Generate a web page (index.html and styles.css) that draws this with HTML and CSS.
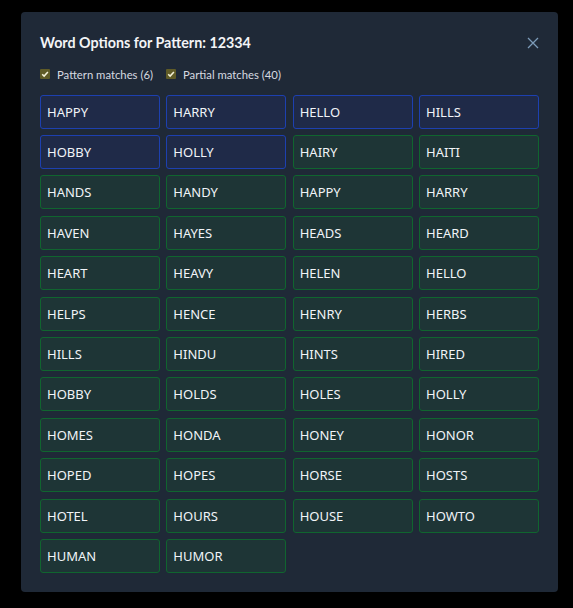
FILE: index.html
```html
<!DOCTYPE html>
<html>
<head>
<meta charset="utf-8">
<link rel="stylesheet" href="styles.css">
</head>
<body>
<div class="modal">
  <div class="header">
    <h2 class="title">Word Options for Pattern: 12334</h2>
    <button class="close" aria-label="Close">
      <svg width="12" height="12" viewBox="0 0 12 12"><path d="M1 1L11 11M11 1L1 11" stroke="currentColor" stroke-width="1.3" fill="none"/></svg>
    </button>
  </div>
  <div class="filters">
    <label class="filter"><span class="check"><svg width="10" height="10" viewBox="0 0 10 10"><path d="M2.2 5.2L4.1 7.1L7.9 2.9" stroke="#f4f1d8" stroke-width="1.5" fill="none"/></svg></span>Pattern matches (6)</label>
    <label class="filter"><span class="check"><svg width="10" height="10" viewBox="0 0 10 10"><path d="M2.2 5.2L4.1 7.1L7.9 2.9" stroke="#f4f1d8" stroke-width="1.5" fill="none"/></svg></span>Partial matches (40)</label>
  </div>
  <div class="grid">
    <div class="word exact">HAPPY</div>
    <div class="word exact">HARRY</div>
    <div class="word exact">HELLO</div>
    <div class="word exact">HILLS</div>
    <div class="word exact">HOBBY</div>
    <div class="word exact">HOLLY</div>
    <div class="word partial">HAIRY</div>
    <div class="word partial">HAITI</div>
    <div class="word partial">HANDS</div>
    <div class="word partial">HANDY</div>
    <div class="word partial">HAPPY</div>
    <div class="word partial">HARRY</div>
    <div class="word partial">HAVEN</div>
    <div class="word partial">HAYES</div>
    <div class="word partial">HEADS</div>
    <div class="word partial">HEARD</div>
    <div class="word partial">HEART</div>
    <div class="word partial">HEAVY</div>
    <div class="word partial">HELEN</div>
    <div class="word partial">HELLO</div>
    <div class="word partial">HELPS</div>
    <div class="word partial">HENCE</div>
    <div class="word partial">HENRY</div>
    <div class="word partial">HERBS</div>
    <div class="word partial">HILLS</div>
    <div class="word partial">HINDU</div>
    <div class="word partial">HINTS</div>
    <div class="word partial">HIRED</div>
    <div class="word partial">HOBBY</div>
    <div class="word partial">HOLDS</div>
    <div class="word partial">HOLES</div>
    <div class="word partial">HOLLY</div>
    <div class="word partial">HOMES</div>
    <div class="word partial">HONDA</div>
    <div class="word partial">HONEY</div>
    <div class="word partial">HONOR</div>
    <div class="word partial">HOPED</div>
    <div class="word partial">HOPES</div>
    <div class="word partial">HORSE</div>
    <div class="word partial">HOSTS</div>
    <div class="word partial">HOTEL</div>
    <div class="word partial">HOURS</div>
    <div class="word partial">HOUSE</div>
    <div class="word partial">HOWTO</div>
    <div class="word partial">HUMAN</div>
    <div class="word partial">HUMOR</div>
  </div>
</div>
</body>
</html>
```

FILE: styles.css
```css
html, body {
  margin: 0;
  padding: 0;
  background: #000;
  height: 100%;
}
body {
  font-family: "Noto Sans", "Open Sans", sans-serif;
  color: #e5e7eb;
  padding: 12px 0 0 21px;
  box-sizing: border-box;
}
.modal {
  width: 537px;
  height: 580px;
  box-sizing: border-box;
  background: #1f2937;
  border-radius: 4px;
  padding: 19px 19px 19px 19px;
  display: flex;
  flex-direction: column;
}
.header {
  display: flex;
  justify-content: space-between;
  align-items: center;
  height: 24px;
}
.title {
  margin: 0;
  font-family: Lato, "Noto Sans", sans-serif;
  font-size: 14.3px;
  font-weight: 700;
  color: #f3f4f6;
  line-height: 24px;
}
.close {
  background: none;
  border: 0;
  padding: 0;
  width: 12px;
  height: 12px;
  color: #7c9bb8;
  display: flex;
}
.filters {
  display: flex;
  gap: 13px;
  margin-top: 12px;
  height: 15px;
  align-items: center;
}
.filter {
  display: flex;
  align-items: center;
  gap: 7px;
  font-family: Lato, "Noto Sans", sans-serif;
  font-size: 11.3px;
  color: #d6dae0;
}
.check {
  width: 10px;
  height: 10px;
  background: #5f5b27;
  border-radius: 1px;
  display: flex;
}
.grid {
  margin-top: 13px;
  display: grid;
  grid-template-columns: repeat(4, 1fr);
  gap: 6.4px;
}
.word {
  height: 34px;
  box-sizing: border-box;
  border-radius: 3px;
  padding: 0 6px;
  display: flex;
  align-items: center;
  font-size: 13px;
  color: #f1f4f8;
}
.exact {
  background: #1f2a48;
  border: 1px solid #1d40b0;
}
.partial {
  background: #1e3536;
  border: 1px solid #10652f;
}
```
